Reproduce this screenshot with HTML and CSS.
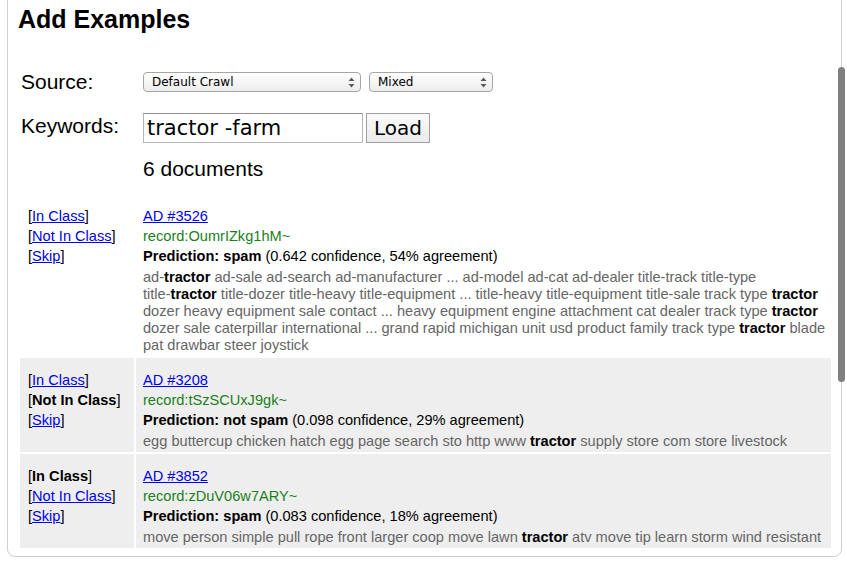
FILE: index.html
```html
<!DOCTYPE html>
<html lang="en">
<head>
    <meta charset="UTF-8">
    <title>Add Examples</title>
    <link rel="stylesheet" href="styles.css">
</head>
<body>
    <div class="panel">
        <h2>Add Examples</h2>
        <form class="search">
            <div class="field source">
                <label>Source:</label>
                <span class="select wide">
                    <select><option>Default Crawl</option></select>
                    <svg class="arrows" width="7" height="11" viewBox="0 0 7 11"><path d="M3.5 0.5L6.5 4H0.5Z M3.5 10.5L6.5 7H0.5Z" fill="#5a5a5a"/></svg>
                </span>
                <span class="select narrow">
                    <select><option>Mixed</option></select>
                    <svg class="arrows" width="7" height="11" viewBox="0 0 7 11"><path d="M3.5 0.5L6.5 4H0.5Z M3.5 10.5L6.5 7H0.5Z" fill="#5a5a5a"/></svg>
                </span>
            </div>
            <div class="field keywords">
                <label>Keywords:</label>
                <input type="text" value="tractor -farm">
                <button type="button">Load</button>
            </div>
            <div class="count">6 documents</div>
        </form>

        <table class="docs">
            <tr class="unlabeled">
                <td class="actions">
                    <div>[<a href="#">In Class</a>]</div>
                    <div>[<a href="#">Not In Class</a>]</div>
                    <div>[<a href="#">Skip</a>]</div>
                </td>
                <td class="doc">
                    <div><a href="#">AD #3526</a></div>
                    <div class="record">record:OumrIZkg1hM~</div>
                    <div><b>Prediction: spam</b> (0.642 confidence, 54% agreement)</div>
                    <div class="snippet"><span class="term">ad-<b>tractor</b></span> ad-sale ad-search ad-manufacturer ... ad-model ad-cat ad-dealer title-track title-type <span class="term">title-<b>tractor</b></span> title-dozer title-heavy title-equipment ... title-heavy title-equipment title-sale track type <b>tractor</b> dozer heavy equipment sale contact ... heavy equipment engine attachment cat dealer track type <b>tractor</b> dozer sale caterpillar international ... grand rapid michigan unit usd product family track type <b>tractor</b> blade pat drawbar steer joystick</div>
                </td>
            </tr>
            <tr class="labeled">
                <td class="actions">
                    <div>[<a href="#">In Class</a>]</div>
                    <div>[<b>Not In Class</b>]</div>
                    <div>[<a href="#">Skip</a>]</div>
                </td>
                <td class="doc">
                    <div><a href="#">AD #3208</a></div>
                    <div class="record">record:tSzSCUxJ9gk~</div>
                    <div><b>Prediction: not spam</b> (0.098 confidence, 29% agreement)</div>
                    <div class="snippet">egg buttercup chicken hatch egg page search sto http www <b>tractor</b> supply store com store livestock</div>
                </td>
            </tr>
            <tr class="labeled">
                <td class="actions">
                    <div>[<b>In Class</b>]</div>
                    <div>[<a href="#">Not In Class</a>]</div>
                    <div>[<a href="#">Skip</a>]</div>
                </td>
                <td class="doc">
                    <div><a href="#">AD #3852</a></div>
                    <div class="record">record:zDuV06w7ARY~</div>
                    <div><b>Prediction: spam</b> (0.083 confidence, 18% agreement)</div>
                    <div class="snippet">move person simple pull rope front larger coop move lawn <b>tractor</b> atv move tip learn storm wind resistant</div>
                </td>
            </tr>
        </table>
    </div>
    <div class="scrollbar"></div>
</body>
</html>
```

FILE: styles.css
```css
body {
    margin: 0;
    font-family: "Liberation Sans", Arial, sans-serif;
    font-size: 14.6px;
    color: #000;
    background: #fff;
}

.panel {
    margin: -20px 5px 0 7px;
    padding: 23px 8px 6px 10px;
    border: 1px solid #cfcfcf;
    border-radius: 8px;
}

.panel h2 {
    margin: 0;
    font-size: 25px;
    line-height: 30px;
    font-weight: bold;
}

.search {
    margin-top: 36px;
}

.field {
    display: flex;
    align-items: center;
}

.field label {
    width: 122px;
    padding-left: 3px;
    font-size: 21px;
    line-height: 24px;
}

.source {
    height: 24px;
}

.keywords {
    height: 30px;
    margin-top: 19px;
}

.keywords label {
    margin-top: -5px;
}

.select {
    position: relative;
    display: inline-block;
    margin-right: 8px;
}

.select select {
    appearance: none;
    -webkit-appearance: none;
    height: 20px;
    padding: 0 0 0 8px;
    border: 1px solid #a6a6a6;
    border-radius: 4px;
    background: linear-gradient(#ffffff, #ececec);
    font-family: "DejaVu Sans", sans-serif;
    font-size: 12px;
    color: #000;
    display: block;
}

.select.wide select {
    width: 218px;
}

.select.narrow select {
    width: 124px;
}

.select .arrows {
    position: absolute;
    right: 6px;
    top: 5px;
    pointer-events: none;
}

.keywords input {
    box-sizing: border-box;
    width: 220px;
    height: 30px;
    margin: 0;
    padding: 0 3px;
    border: 1px solid #b5b5b5;
    border-top-color: #8e8e8e;
    font-family: "DejaVu Sans", sans-serif;
    font-size: 21px;
    color: #000;
}

.keywords button {
    box-sizing: border-box;
    height: 30px;
    width: 64px;
    margin-left: 3px;
    padding: 0;
    border: 1px solid #a0a0a0;
    border-radius: 0;
    background: linear-gradient(#fafafa, #ececec);
    font-family: "DejaVu Sans", sans-serif;
    font-size: 20px;
    color: #000;
}

.count {
    margin: 14px 0 0 125px;
    font-size: 21px;
    line-height: 24px;
}

.docs {
    margin-top: 11px;
    width: 100%;
    border-collapse: separate;
    border-spacing: 2px;
}

.docs td {
    vertical-align: top;
    padding: 12px 2px 2px 7px;
}

.docs td.actions {
    width: 98px;
    padding-left: 8px;
    padding-right: 8px;
}

.labeled td {
    background: #eeeeee;
}

.docs div {
    line-height: 20px;
}

.docs a {
    color: #0000ee;
}

.record {
    color: #1a801a;
}

.docs .snippet {
    margin-top: 3px;
    line-height: 17px;
    color: #666;
}

.snippet b {
    color: #000;
}

.term {
    white-space: nowrap;
}

.scrollbar {
    position: fixed;
    top: 67px;
    right: 2px;
    width: 7px;
    height: 315px;
    border-radius: 4px;
    background: #7f7f7f;
}
```
